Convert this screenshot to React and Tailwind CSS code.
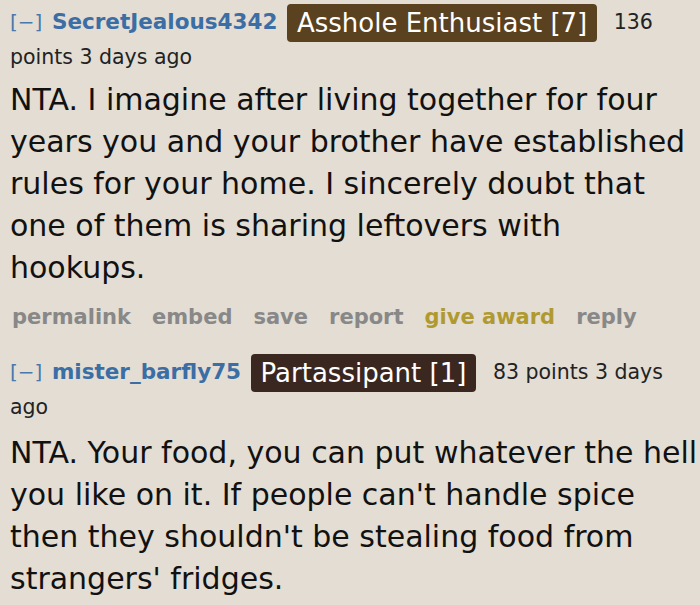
import React from "react";

const comments = [
  {
    user: "SecretJealous4342",
    flair: "Asshole Enthusiast [7]",
    flairBg: "bg-[#5a4120]",
    meta: "136 points 3 days ago",
    body: "NTA. I imagine after living together for four years you and your brother have established rules for your home. I sincerely doubt that one of them is sharing leftovers with hookups.",
    bodyMt: "mt-[7px]",
    actions: true,
  },
  {
    user: "mister_barfly75",
    flair: "Partassipant [1]",
    flairBg: "bg-[#3a271f]",
    meta: "83 points 3 days ago",
    body: "NTA. Your food, you can put whatever the hell you like on it. If people can't handle spice then they shouldn't be stealing food from strangers' fridges.",
    bodyMt: "mt-[10px]",
    actions: false,
  },
];

const Comment = ({ c }) => {
  return (
    <div className="pl-[10px]">
      {/* header */}
      <div className="text-[20.5px] leading-[30px] text-[#222]">
        <span className="text-[#4a78ad] text-[20px]">[−]</span>{" "}
        <span className="font-bold text-[#3b6ea5] text-[21.5px] ml-[3px]">{c.user}</span>{" "}
        <span
          className={`${c.flairBg} inline-block text-white text-[26px] leading-[38px] px-[10px] rounded-[4px] ml-[3px] mr-[10px] align-middle`}
        >
          {c.flair}
        </span>{" "}
        {c.meta}
      </div>

      {/* body */}
      <div className={`text-[30px] leading-[42px] text-[#111] ${c.bodyMt}`}>
        {c.body}
      </div>

      {c.actions && (
        <div className="flex gap-[21px] text-[21px] leading-[24px] font-bold text-[#888] mt-[16px] pl-[2px]">
          <span>permalink</span>
          <span>embed</span>
          <span>save</span>
          <span>report</span>
          <span className="text-[#b09a30]">give award</span>
          <span>reply</span>
        </div>
      )}
    </div>
  );
};

export default function App() {
  return (
    <div
      className="w-[700px] h-[605px] bg-[#e3ddd3] overflow-hidden pt-[4px]"
      style={{ fontFamily: '"DejaVu Sans", Verdana, sans-serif' }}
    >
      <Comment c={comments[0]} />
      <div className="h-[25px]" />
      <Comment c={comments[1]} />
    </div>
  );
}
